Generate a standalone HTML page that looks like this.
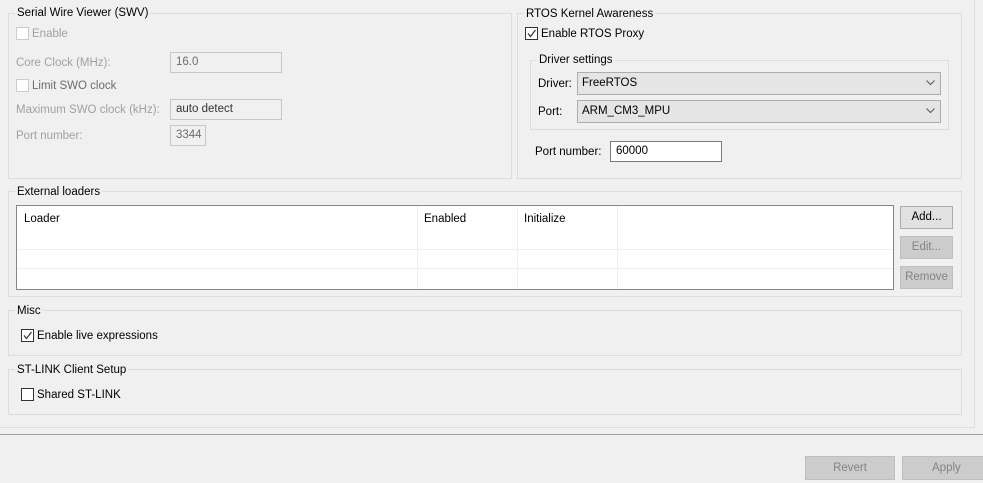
<!DOCTYPE html>
<html><head><meta charset="utf-8"><style>
*{box-sizing:border-box;margin:0;padding:0}
body{width:983px;height:483px;background:#f0f0f0;font-family:"Liberation Sans",sans-serif;font-size:11.5px;color:#000;position:relative;overflow:hidden}
.a{position:absolute}
.g{position:absolute;border:1px solid #dcdcdc}
.gt{position:absolute;background:#f0f0f0;padding:0 2px;line-height:14px;white-space:nowrap}
.t{position:absolute;line-height:14px;white-space:nowrap}
.dis{color:#a0a0a0}
.cb{position:absolute;width:13px;height:13px;border:1px solid #333;background:#fff}
.cbd{border-color:#cccccc}
.in{position:absolute;border:1px solid #c8c8c8;background:#f0f0f0;color:#6d6d6d;padding-left:5px;line-height:19px}
.combo{position:absolute;border:1px solid #adadad;background:#e5e5e5;padding-left:4px;line-height:20px}
.btn{position:absolute;border:1px solid #adadad;background:#e1e1e1;text-align:center;line-height:20px}
.bd{border-color:#bfbfbf;background:#cccccc;color:#838383}
</style></head><body>
<div class="a" style="left:0;top:0;width:975px;height:428px;border-right:1px solid #dcdcdc;border-bottom:1px solid #dcdcdc"></div>
<div class="a" style="left:0;top:434px;width:983px;height:1px;background:#a0a0a0"></div>

<div class="g" style="left:8px;top:13px;width:504px;height:166px"></div>
<div class="gt" style="left:15px;top:6px">Serial Wire Viewer (SWV)</div>
<div class="cb cbd" style="left:16px;top:27px"></div>
<div class="t dis" style="left:32px;top:27px">Enable</div>
<div class="t dis" style="left:16px;top:56px">Core Clock (MHz):</div>
<div class="in" style="left:170px;top:52px;width:112px;height:21px">16.0</div>
<div class="cb cbd" style="left:16px;top:79px"></div>
<div class="t" style="left:32px;top:79px;color:#6d6d6d">Limit SWO clock</div>
<div class="t dis" style="left:16px;top:103px">Maximum SWO clock (kHz):</div>
<div class="in" style="left:170px;top:99px;width:112px;height:21px;color:#333">auto detect</div>
<div class="t dis" style="left:16px;top:129px">Port number:</div>
<div class="in" style="left:170px;top:125px;width:36px;height:21px">3344</div>

<div class="g" style="left:517px;top:13px;width:445px;height:166px"></div>
<div class="gt" style="left:524px;top:7px">RTOS Kernel Awareness</div>
<div class="cb" style="left:525px;top:27px"><svg width="11" height="11" style="position:absolute;left:0;top:0"><path d="M2 5.5 L4.5 8.5 L9.5 2" stroke="#333" stroke-width="1.2" fill="none"/></svg></div>
<div class="t" style="left:541px;top:27px">Enable RTOS Proxy</div>
<div class="g" style="left:530px;top:60px;width:419px;height:70px"></div>
<div class="gt" style="left:537px;top:53px">Driver settings</div>
<div class="t" style="left:538px;top:77px">Driver:</div>
<div class="combo" style="left:577px;top:72px;width:364px;height:23px">FreeRTOS</div>
<div class="t" style="left:538px;top:105px">Port:</div>
<div class="combo" style="left:577px;top:100px;width:364px;height:23px">ARM_CM3_MPU</div>
<svg class="a" style="left:926px;top:80px" width="9" height="6"><path d="M0.5 0.5 L4.5 4.5 L8.5 0.5" stroke="#555" fill="none"/></svg>
<svg class="a" style="left:926px;top:108px" width="9" height="6"><path d="M0.5 0.5 L4.5 4.5 L8.5 0.5" stroke="#555" fill="none"/></svg>
<div class="t" style="left:535px;top:145px">Port number:</div>
<div class="a" style="left:610px;top:141px;width:112px;height:21px;border:1px solid #7a7a7a;background:#fff;padding-left:5px;line-height:19px">60000</div>

<div class="g" style="left:8px;top:191px;width:954px;height:106px"></div>
<div class="gt" style="left:15px;top:185px">External loaders</div>
<div class="a" style="left:16px;top:205px;width:878px;height:85px;border:1px solid #828790;background:#fff"></div>
<div class="a" style="left:17px;top:249px;width:876px;height:1px;background:#f0f0f0"></div>
<div class="a" style="left:17px;top:268px;width:876px;height:1px;background:#f0f0f0"></div>
<div class="a" style="left:417px;top:206px;width:1px;height:83px;background:#f0f0f0"></div>
<div class="a" style="left:517px;top:206px;width:1px;height:83px;background:#f0f0f0"></div>
<div class="a" style="left:617px;top:206px;width:1px;height:83px;background:#f0f0f0"></div>
<div class="t" style="left:24px;top:212px">Loader</div>
<div class="t" style="left:424px;top:212px">Enabled</div>
<div class="t" style="left:524px;top:212px">Initialize</div>
<div class="btn" style="left:900px;top:206px;width:53px;height:23px">Add...</div>
<div class="btn bd" style="left:900px;top:236px;width:53px;height:23px">Edit...</div>
<div class="btn bd" style="left:900px;top:266px;width:53px;height:23px">Remove</div>

<div class="g" style="left:8px;top:310px;width:954px;height:46px"></div>
<div class="gt" style="left:15px;top:304px">Misc</div>
<div class="cb" style="left:21px;top:329px"><svg width="11" height="11" style="position:absolute;left:0;top:0"><path d="M2 5.5 L4.5 8.5 L9.5 2" stroke="#333" stroke-width="1.2" fill="none"/></svg></div>
<div class="t" style="left:37px;top:329px">Enable live expressions</div>

<div class="g" style="left:8px;top:369px;width:954px;height:46px"></div>
<div class="gt" style="left:15px;top:363px">ST-LINK Client Setup</div>
<div class="cb" style="left:21px;top:388px"></div>
<div class="t" style="left:37px;top:388px">Shared ST-LINK</div>

<div class="btn bd" style="left:805px;top:456px;width:90px;height:24px;line-height:22px">Revert</div>
<div class="btn bd" style="left:902px;top:456px;width:90px;height:24px;line-height:22px;text-align:left;padding-left:29px">Apply</div>
</body></html>
